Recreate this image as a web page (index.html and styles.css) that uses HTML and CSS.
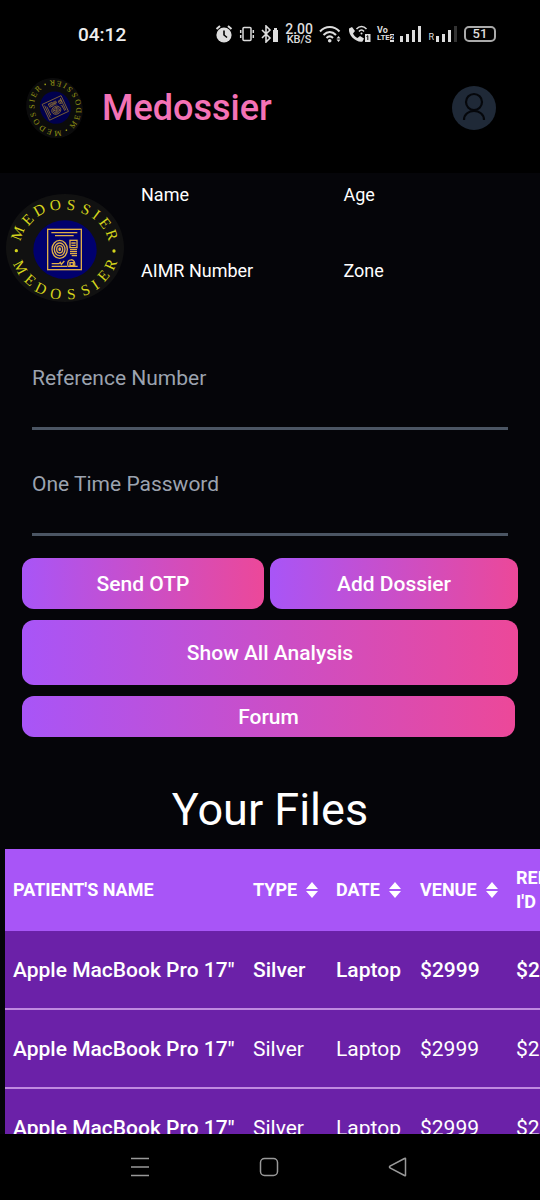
FILE: index.html
```html
<!DOCTYPE html>
<html lang="en">
<head>
<meta charset="utf-8">
<meta name="viewport" content="width=device-width, initial-scale=1">
<title>Medossier</title>
<link rel="stylesheet" href="styles.css">
</head>
<body>
<div class="status">
  <time class="clock">04:12</time>
  <div class="status-icons">
    <svg width="18" height="20" viewBox="0 0 18 20"><circle cx="9" cy="11" r="7.6" fill="#ddd"/><path d="M1.500 5 5 2M16.500 5 13 2" stroke="#ddd" stroke-width="2"/><path d="M9 6.500V11l3 2.500" fill="none" stroke="#000" stroke-width="1.600"/></svg>
    <svg width="16" height="18" viewBox="0 0 16 18" fill="none" stroke="#ddd" stroke-width="1.500"><rect x="4" y="2.500" width="8" height="13" rx="1"/><path d="M1.700 5v3M1.700 10v3M14.300 5v3M14.300 10v3"/></svg>
    <svg width="18" height="18" viewBox="0 0 18 18" fill="none" stroke="#ddd" stroke-width="1.600"><path d="m1 5 8 8-4 4V1l4 4-8 8"/><path d="M12 5h5v12h-5zM13 3h3v2h-3z" fill="#ddd" stroke="none"/></svg>
    <div class="speed"><b>2.00</b><span>KB/S</span></div>
    <svg width="23" height="18" viewBox="0 0 23 18" fill="none" stroke="#ddd" stroke-width="2"><path d="M1 6.500c5.500-6 14-6 19.500 0M4.500 10c4-4 8.500-4 12.500 0M7.500 13c2-2 4.500-2 6.500 0"/><circle cx="10.700" cy="15.700" r="1.800" fill="#ddd" stroke="none"/><path d="m17.500 13.500 2-2.500 2 2.500zM17.500 14.500l2 2.500 2-2.500z" fill="#ddd" stroke="none"/></svg>
    <svg width="23" height="18" viewBox="0 0 23 18"><path d="M1 3.500 4 2l3 4-2 2.500c1 2 2.500 3.500 4.500 4.500L12 11l4 2.500-1.500 3C9 18 0 11 1 3.500z" fill="#ddd"/><path d="M8.500 4c3-3.500 7-3.500 10 0M11 6.500c1.500-2 3.500-2 5 0" fill="none" stroke="#ddd" stroke-width="1.500"/><circle cx="13.500" cy="8.500" r="1" fill="#ddd"/><path d="M17 9h5.500v8H17z" fill="#ddd"/><path d="m18.500 11.500 1.300-.8V15" fill="none" stroke="#000"/></svg>
    <div class="volte"><b>Vo</b><b class="lte">LTE<i>2</i></b></div>
    <svg width="22" height="16" viewBox="0 0 22 16" fill="#ddd"><path d="M0 10h3v6H0zM6 8h3v8H6zM12 4h3v12h-3zM18 0h3v16h-3z"/></svg>
    <div class="sim"><span>R</span><svg width="22" height="16" viewBox="0 0 22 16" fill="#ddd"><path d="M0 10h3v6H0zM6 8h3v8H6zM12 4h3v12h-3z"/><path d="M18 0h3v16h-3z" fill="#333"/></svg></div>
    <div class="battery">51</div>
  </div>
</div>

<header class="top">
  <svg class="logo-small" viewBox="19 40 354 324" aria-label="Medossier logo"><use href="#seal"/></svg>
  <h1>Medossier</h1>
  <button class="avatar" aria-label="Account"><svg width="44" height="44" viewBox="0 0 44 44" fill="none" stroke="#05070b" stroke-width="2.200"><circle cx="22" cy="16" r="8"/><path d="M12 34c0-12 20-12 20 0"/></svg></button>
</header>

<main>
  <section class="profile">
    <svg class="logo" viewBox="19 40 354 324" aria-label="Medossier seal">
      <g id="seal">
        <ellipse cx="196" cy="202" rx="177" ry="162" fill="#111111"/>
        <ellipse cx="196" cy="207" rx="95" ry="88" fill="#00006e"/>
        <g class="seal-text">
          <text transform="translate(54 158) rotate(-69)" y="15">M</text><text transform="translate(84 117) rotate(-47)" y="15">E</text><text transform="translate(119 88) rotate(-29)" y="15">D</text><text transform="translate(167 73) rotate(-10)" y="15">O</text><text transform="translate(214 73) rotate(7)" y="15">S</text><text transform="translate(259 86) rotate(24)" y="15">S</text><text transform="translate(290 102) rotate(37)" y="15">I</text><text transform="translate(316 128) rotate(53)" y="15">E</text><text transform="translate(337 163) rotate(71)" y="15">R</text>
          <text transform="translate(62 260) rotate(62)" y="15">M</text><text transform="translate(91 298) rotate(41)" y="15">E</text><text transform="translate(124 324) rotate(26)" y="15">D</text><text transform="translate(168 340) rotate(9)" y="15">O</text><text transform="translate(215 340) rotate(-6)" y="15">S</text><text transform="translate(257 328) rotate(-21)" y="15">S</text><text transform="translate(287 312) rotate(-34)" y="15">I</text><text transform="translate(312 285) rotate(-49)" y="15">E</text><text transform="translate(333 252) rotate(-66)" y="15">R</text>
        </g>
        <circle cx="50" cy="210" r="5" fill="#d4d41c"/><circle cx="343" cy="211" r="5" fill="#d4d41c"/>
        <g fill="none" stroke="#dfae48" stroke-width="4">
          <rect x="144" y="146" width="101" height="121"/>
          <path d="M155 156h78M166 165h56"/>
          <ellipse cx="180" cy="206" rx="23" ry="27"/><ellipse cx="180" cy="206" rx="16" ry="19"/><ellipse cx="180" cy="206" rx="9" ry="11"/><ellipse cx="180" cy="206" rx="2" ry="4"/>
          <rect x="211" y="179" width="21" height="22"/><path d="M215 187h13M215 194h13M211 207h21M211 213h21M211 219h21M216 225h16"/>
          <path d="M156 249h22l4-4 3 6 9-10M156 257h46M205 257c-8-26 26-26 20-1M211 246h10v9h-10zM204 257h30"/>
        </g>
      </g>
    </svg>
    <dl class="facts"><dt>Name</dt><dt>Age</dt><dt>AIMR Number</dt><dt>Zone</dt></dl>
  </section>

  <form class="form">
    <div class="field"><label for="ref">Reference Number</label><input id="ref" type="text"></div>
    <div class="field"><label for="otp">One Time Password</label><input id="otp" type="text"></div>
    <div class="actions">
      <div class="pair"><button type="button" class="btn send">Send OTP</button><button type="button" class="btn add">Add Dossier</button></div>
      <button type="button" class="btn tall">Show All Analysis</button>
      <button type="button" class="btn short">Forum</button>
    </div>
  </form>

  <h2>Your Files</h2>
  <div class="table-wrap">
    <table>
      <colgroup><col class="c-name"><col class="c-type"><col class="c-date"><col class="c-venue"><col class="c-id"></colgroup>
      <thead><tr>
        <th>Patient's Name</th>
        <th><span class="sort">Type<svg width="12" height="16" viewBox="0 0 12 16"><path d="M0 7 6 0l6 7zM0 9l6 7 6-7z"/></svg></span></th>
        <th><span class="sort">Date<svg width="12" height="16" viewBox="0 0 12 16"><path d="M0 7 6 0l6 7zM0 9l6 7 6-7z"/></svg></span></th>
        <th><span class="sort">Venue<svg width="12" height="16" viewBox="0 0 12 16"><path d="M0 7 6 0l6 7zM0 9l6 7 6-7z"/></svg></span></th>
        <th>Report<br>I'd</th>
      </tr></thead>
      <tbody>
        <tr class="strong"><th>Apple MacBook Pro 17"</th><td>Silver</td><td>Laptop</td><td>$2999</td><td>$2999</td></tr>
        <tr><th>Apple MacBook Pro 17"</th><td>Silver</td><td>Laptop</td><td>$2999</td><td>$2999</td></tr>
        <tr><th>Apple MacBook Pro 17"</th><td>Silver</td><td>Laptop</td><td>$2999</td><td>$2999</td></tr>
      </tbody>
    </table>
  </div>
</main>

<nav class="system-nav">
  <button aria-label="Recent apps"><svg width="20" height="20" viewBox="0 0 20 20"><path d="M1 1.500h18M1 10h18M1 18.500h18"/></svg></button>
  <button aria-label="Home"><svg width="20" height="20" viewBox="0 0 20 20"><rect x="1.500" y="1.500" width="17" height="17" rx="4"/></svg></button>
  <button aria-label="Back"><svg width="20" height="20" viewBox="0 0 20 20"><path d="M17.500 1.500v17q0 .5-1 0L2 11q-1-1 0-2L16.500 1.500q1-.5 1 0z"/></svg></button>
</nav>
</body>
</html>
```
FILE: styles.css
```css
* { box-sizing: border-box; }
body {
  margin: 0;
  height: 100vh;
  display: flex;
  flex-direction: column;
  overflow: hidden;
  background: #000;
  color: #fff;
  font-family: Roboto, sans-serif;
}
button { border: 0; padding: 0; font: inherit; color: inherit; background: none; }
svg { display: block; flex: none; }

.status {
  flex: none;
  display: flex;
  align-items: center;
  justify-content: space-between;
  height: 68px;
  padding: 0 44px 0 78px;
}
.clock { font-size: 19px; font-weight: 500; color: #eee; }
.status-icons { display: flex; align-items: center; gap: 6px; color: #ddd; }
.speed { display: flex; flex-direction: column; align-items: center; font-size: 11px; line-height: 10px; font-weight: 500; }
.speed b { font-size: 14px; line-height: 12px; font-weight: 500; }
.volte { display: flex; flex-direction: column; font-size: 9px; line-height: 8px; }
.lte { display: flex; font-size: 8px; }
.volte i { font-style: normal; background: #ddd; color: #000; }
.sim { display: flex; align-items: flex-end; gap: 2px; font-size: 9px; line-height: 9px; }
.battery {
  width: 32px;
  border: 2px solid #aaa;
  border-radius: 5px;
  font-size: 13px;
  line-height: 12px;
  font-weight: 500;
  text-align: center;
}

.top {
  flex: none;
  display: flex;
  align-items: center;
  height: 105px;
  padding: 0 44px 26px 24px;
}
.logo-small { width: 61px; height: 56px; transform: rotate(-115deg); opacity: 0.7; }
.top h1 { margin: 0 0 0 17px; font-size: 36px; line-height: 44px; font-weight: 500; color: #f472b6; }
.avatar { margin-left: auto; width: 44px; height: 44px; border-radius: 50%; background: #1f2937; }

main { flex: 1; min-height: 0; overflow: hidden; background: #050509; }
.profile { display: flex; padding: 10px 0 0 6px; }
.logo { width: 118px; height: 108px; margin-top: 11px; }
.seal-text { font-family: "Liberation Serif", serif; font-size: 46px; text-anchor: middle; fill: #d4d41c; }
.facts {
  flex: 1;
  display: grid;
  grid-template-columns: 1fr 1fr;
  grid-auto-rows: 76px;
  column-gap: 6px;
  margin: 0 0 0 17px;
  font-size: 18px;
  line-height: 24px;
}

.form { padding: 29px 22px 0; }
.field { display: flex; flex-direction: column; height: 106px; padding: 0 10px; }
.field label { font-size: 21px; line-height: 28px; color: #9ca3af; }
.field input {
  width: 100%;
  height: 38px;
  padding: 0;
  border: 0;
  border-bottom: 3px solid #4b5563;
  background: none;
  color: #fff;
  font: inherit;
  outline: 0;
}
.actions { display: flex; flex-direction: column; gap: 11px; margin-top: -18px; }
.pair { display: flex; gap: 6px; }
.btn {
  border-radius: 12px;
  background: linear-gradient(90deg, #a855f7, #ec4899);
  font-size: 21px;
  line-height: 28px;
  font-weight: 500;
}
.send { flex: 242; height: 51px; }
.add { flex: 248; height: 51px; }
.tall { height: 65px; }
.short { height: 41px; margin-right: 3px; }

h2 { margin: 45px 0 11px; font-size: 45px; line-height: 56px; font-weight: 400; text-align: center; }

.table-wrap { margin-left: 5px; overflow-x: auto; scrollbar-width: none; }
table { width: 640px; table-layout: fixed; border-spacing: 0; text-align: left; background: #6b21a8; }
.c-name { width: 240px; }
.c-type { width: 83px; }
.c-date { width: 84px; }
.c-venue { width: 96px; }
th, td { padding: 0 0 0 8px; white-space: nowrap; }
thead { background: #a855f7; font-size: 18px; line-height: 24px; text-transform: uppercase; }
thead th { height: 82px; font-weight: 700; }
tbody { font-size: 21px; line-height: 28px; }
tbody th, tbody td { height: 79px; border-bottom: 2px solid #c08ae0; }
tbody th, .strong td { font-weight: 500; }
.sort { display: flex; align-items: center; gap: 9px; }
.sort svg { fill: #fff; }

.system-nav {
  flex: none;
  display: flex;
  justify-content: center;
  gap: 109px;
  height: 66px;
  padding-right: 2px;
  background: #000;
}
.system-nav svg { fill: none; stroke: #999; stroke-width: 1.5; }
```
